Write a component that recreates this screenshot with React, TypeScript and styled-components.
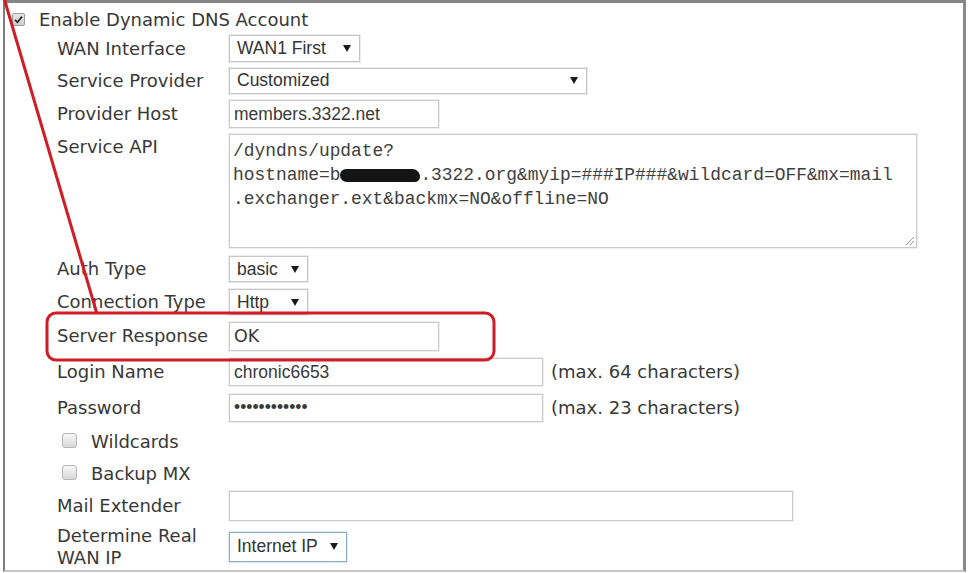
import React from "react";
import styled, { createGlobalStyle } from "styled-components";

const Global = createGlobalStyle`
  html, body { margin: 0; padding: 0; background: #fff; }
  body {
    font-family: "DejaVu Sans", Verdana, sans-serif;
    color: #383838;
  }
`;

const Page = styled.div`
  position: relative;
  width: 968px;
  height: 573px;
  overflow: hidden;
  background: #fff;
`;

const Frame = styled.div`
  box-sizing: border-box;
  margin-left: 3px;
  width: 963px;
  height: 572px;
  border-top: 3px solid #868686;
  border-left: 2px solid #7d7d7d;
  border-right: 3px solid #8a8a8a;
  border-bottom: 2px solid #c6c6c6;
  padding: 4px 0 0 7px;
  background: #fff;
`;

const Row = styled.div<{ $h: number; $top?: boolean }>`
  display: flex;
  align-items: ${(p) => (p.$top ? "flex-start" : "center")};
  height: ${(p) => p.$h}px;
`;

const Form = styled.div`
  margin-left: 45px;
`;

const Label = styled.div<{ $mt?: number }>`
  flex: none;
  width: 172px;
  font-size: 18px;
  line-height: 22px;
  margin-top: ${(p) => p.$mt ?? 0}px;
`;

const Title = styled.span`
  font-size: 18px;
  line-height: 22px;
  margin-left: 14px;
`;

const CheckedBox = styled.span`
  box-sizing: border-box;
  flex: none;
  width: 13px;
  height: 13px;
  border: 1px solid #9c9c9c;
  border-radius: 2px;
  background: linear-gradient(#e6e6e6, #cfcfcf);
  display: flex;
  align-items: center;
  justify-content: center;
  margin-top: -2px;
`;

const EmptyBox = styled.span`
  box-sizing: border-box;
  flex: none;
  width: 15px;
  height: 15px;
  border: 1px solid #b4b4b4;
  border-radius: 3px;
  background: linear-gradient(#f6f6f6, #d9d9d9);
  margin: -3px 0 0 5px;
`;

const OptionText = styled.span`
  font-size: 18px;
  line-height: 22px;
  margin-left: 14px;
`;

const Select = styled.div<{ $w: number; $h: number; $focus?: boolean }>`
  box-sizing: border-box;
  flex: none;
  width: ${(p) => p.$w}px;
  height: ${(p) => p.$h}px;
  display: flex;
  align-items: center;
  justify-content: space-between;
  padding: 0 8px 0 7px;
  border: 1px solid ${(p) => (p.$focus ? "#8eaecb" : "#c6c6c6")};
  box-shadow: 0 0 0 1px ${(p) => (p.$focus ? "#dbe7f2" : "#ececec")};
  background: #fff;
  font-family: "Liberation Sans", Arial, sans-serif;
  font-size: 17.5px;
  color: #333;
`;

const Arrow = styled.span`
  width: 0;
  height: 0;
  border-left: 4px solid transparent;
  border-right: 4px solid transparent;
  border-top: 7px solid #1a1a1a;
`;

const Field = styled.input<{ $w: number; $h: number; $sans?: boolean }>`
  box-sizing: border-box;
  flex: none;
  width: ${(p) => p.$w}px;
  height: ${(p) => p.$h}px;
  margin: 0;
  padding: 0 4px;
  border: 1px solid #cbcbcb;
  box-shadow: 0 0 0 1px #efefef;
  outline: none;
  background: #fff;
  font-family: ${(p) =>
    p.$sans ? '"DejaVu Sans", Verdana, sans-serif' : '"Liberation Sans", Arial, sans-serif'};
  font-size: 17.5px;
  color: #3a3a3a;
`;

const Hint = styled.span`
  font-size: 18px;
  line-height: 22px;
  margin-left: 8px;
`;

const ApiBox = styled.div`
  position: relative;
  box-sizing: border-box;
  flex: none;
  width: 688px;
  height: 114px;
  margin-top: 3px;
  padding: 4px 3px;
  border: 1px solid #cbcbcb;
  box-shadow: 0 0 0 1px #efefef;
  font-family: "Liberation Mono", "Courier New", monospace;
  font-size: 17.9px;
  line-height: 24px;
  color: #404040;
`;

const ApiLine = styled.div`
  display: flex;
  align-items: center;
  height: 24px;
  white-space: pre;
`;

const Redacted = styled.span`
  flex: none;
  width: 80px;
  height: 13px;
  margin-top: 1px;
  background: #141414;
  border-radius: 7px 9px 6px 8px;
`;

const Grip = styled.svg`
  position: absolute;
  right: 1px;
  bottom: 1px;
`;

const Overlay = styled.svg`
  position: absolute;
  left: 0;
  top: 0;
  pointer-events: none;
`;

export default function App() {
  return (
    <>
      <Global />
      <Page>
        <Frame>
          <Row $h={26}>
            <CheckedBox>
              <svg width="9" height="9" viewBox="0 0 9 9">
                <path d="M1 4.8 L3.4 7.2 L8 1.6" fill="none" stroke="#2b2b2b" strokeWidth="1.8" />
              </svg>
            </CheckedBox>
            <Title>Enable Dynamic DNS Account</Title>
          </Row>
          <Form>
            <Row $h={31}>
              <Label>WAN Interface</Label>
              <Select $w={131} $h={27}>
                WAN1 First <Arrow />
              </Select>
            </Row>
            <Row $h={33}>
              <Label>Service Provider</Label>
              <Select $w={358} $h={26}>
                Customized <Arrow />
              </Select>
            </Row>
            <Row $h={34}>
              <Label>Provider Host</Label>
              <Field $w={210} $h={28} readOnly defaultValue="members.3322.net" />
            </Row>
            <Row $h={121} $top>
              <Label $mt={5}>Service API</Label>
              <ApiBox>
                <ApiLine>/dyndns/update?</ApiLine>
                <ApiLine>
                  <span>hostname=b</span>
                  <Redacted />
                  <span>.3322.org&amp;myip=###IP###&amp;wildcard=OFF&amp;mx=mail</span>
                </ApiLine>
                <ApiLine>.exchanger.ext&amp;backmx=NO&amp;offline=NO</ApiLine>
                <Grip width="11" height="11" viewBox="0 0 11 11">
                  <path d="M10 2 L2 10 M10 6 L6 10" stroke="#9a9a9a" strokeWidth="1" />
                </Grip>
              </ApiBox>
            </Row>
            <Row $h={34}>
              <Label>Auth Type</Label>
              <Select $w={79} $h={26}>
                basic <Arrow />
              </Select>
            </Row>
            <Row $h={32}>
              <Label>Connection Type</Label>
              <Select $w={79} $h={26}>
                Http <Arrow />
              </Select>
            </Row>
            <Row $h={36}>
              <Label>Server Response</Label>
              <Field $w={210} $h={29} $sans readOnly defaultValue="OK" />
            </Row>
            <Row $h={36}>
              <Label>Login Name</Label>
              <Field $w={314} $h={28} readOnly defaultValue="chronic6653" />
              <Hint>(max. 64 characters)</Hint>
            </Row>
            <Row $h={35}>
              <Label>Password</Label>
              <Field $w={314} $h={28} type="password" readOnly defaultValue="chronic66533" />
              <Hint>(max. 23 characters)</Hint>
            </Row>
            <Row $h={34}>
              <EmptyBox />
              <OptionText>Wildcards</OptionText>
            </Row>
            <Row $h={29}>
              <EmptyBox />
              <OptionText>Backup MX</OptionText>
            </Row>
            <Row $h={35}>
              <Label>Mail Extender</Label>
              <Field $w={564} $h={30} readOnly defaultValue="" />
            </Row>
            <Row $h={47}>
              <Label>Determine Real WAN IP</Label>
              <Select $w={118} $h={30} $focus>
                Internet IP <Arrow />
              </Select>
            </Row>
          </Form>
        </Frame>
        <Overlay width="968" height="573" viewBox="0 0 968 573">
          <line x1="4" y1="-2" x2="97" y2="314" stroke="#d01c24" strokeWidth="3" />
          <rect x="47" y="313" width="447" height="47" rx="9" fill="none" stroke="#d01c24" strokeWidth="3" />
        </Overlay>
      </Page>
    </>
  );
}
